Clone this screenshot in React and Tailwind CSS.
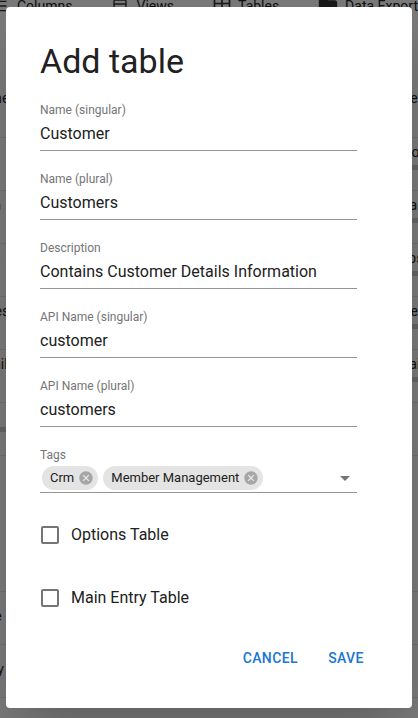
import React from 'react';
import { List, Rows3, Table, Folder } from 'lucide-react';

const fields = [
  { label: 'Name (singular)', value: 'Customer' },
  { label: 'Name (plural)', value: 'Customers' },
  { label: 'Description', value: 'Contains Customer Details Information' },
  { label: 'API Name (singular)', value: 'customer' },
  { label: 'API Name (plural)', value: 'customers' },
];

const bgRows = [
  { left: 'Name', right: 'Types', bar: false },
  { left: 'Title', right: 'Record', bar: true },
  { left: 'Data', right: 'Data', bar: true },
  { left: 'Step', right: 'Steps', bar: true },
  { left: 'Notes', right: 'Notes', bar: true },
  { left: 'Detail', right: 'Detail', bar: true },
];

const CancelIcon = () => (
  <svg viewBox="0 0 24 24" className="w-4 h-4 ml-[-4px] mr-[4px] fill-[#a6a6a6]">
    <path d="M12 2C6.47 2 2 6.47 2 12s4.47 10 10 10 10-4.47 10-10S17.53 2 12 2zm5 13.59L15.59 17 12 13.41 8.41 17 7 15.59 10.59 12 7 8.41 8.41 7 12 10.59 15.59 7 17 8.41 13.41 12 17 15.59z" />
  </svg>
);

const Chip = ({ label }) => (
  <div className="flex items-center h-6 rounded-full bg-[#e4e4e4]">
    <span className="pl-2 pr-2 text-[13px] leading-6 text-[#212121]">{label}</span>
    <CancelIcon />
  </div>
);

const Field = ({ label, value }) => (
  <div className="w-[317px]">
    <div className="h-[15px] text-[12px] leading-[15px] text-[#757575]">{label}</div>
    <div className="pt-[6px] pb-[7px] text-[16px] leading-[19px] text-[#212121] border-b border-[#949494] whitespace-nowrap">
      {value}
    </div>
  </div>
);

const CheckRow = ({ label }) => (
  <div className="flex items-center h-[42px]">
    <div className="w-[18px] h-[18px] ml-[1px] border-2 border-[#757575] rounded-[2px]" />
    <span className="ml-[12px] text-[16px] leading-6 text-[#212121]">{label}</span>
  </div>
);

export default function App() {
  return (
    <div
      className="relative w-full h-[718px] overflow-hidden bg-[#f5f5f5]"
      style={{ fontFamily: 'Roboto, "Liberation Sans", sans-serif' }}
    >
      {/* page behind the dialog */}
      <div className="flex items-center h-[16px] -mt-[2px] text-[14px] leading-4 text-[#222]">
        <div className="flex items-center w-[122px] -ml-[8px] gap-[9px]">
          <List size={16} className="text-[#333]" />
          <span>Columns</span>
        </div>
        <div className="flex items-center w-[110px] gap-[9px] ml-[8px]">
          <Rows3 size={16} className="text-[#333]" />
          <span>Views</span>
        </div>
        <div className="flex items-center w-[116px] gap-[6px]">
          <Table size={20} className="text-[#333]" />
          <span>Tables</span>
        </div>
        <div className="flex items-center gap-[7px] whitespace-nowrap">
          <Folder size={20} className="fill-[#333] text-[#333]" />
          <span>Data Export</span>
        </div>
      </div>
      <div className="mt-[70px] border-b border-[#dedede]">
        {bgRows.map((r, i) => (
          <div
            key={i}
            className={`flex justify-between h-[53px] text-[14px] text-[#222] ${i === 0 ? '' : 'border-t border-[#dedede]'}`}
          >
            <span className="-ml-[28px] mt-[4px]">{r.left}</span>
            <div className="flex flex-col items-start w-[30px] mt-[4px]">
              <span>{r.right}</span>
              {r.bar && <div className="mt-[2px] h-[5px] w-[30px] bg-[#c8c8c8]" />}
            </div>
          </div>
        ))}
      </div>
      <div className="h-[52px] flex items-center">
        <div className="h-[5px] w-[30px] bg-[#c8c8c8]" />
      </div>
      <div className="border-t border-[#dedede] h-[136px]" />
      {['Type', 'Entry', 'Cy'].map((t, i) => (
        <div key={i} className="flex h-[53px] border-t border-[#dedede] text-[14px] text-[#222]">
          <span className="-ml-[28px] mt-[14px]">{t}</span>
        </div>
      ))}

      {/* backdrop */}
      <div className="absolute inset-0 bg-black/50" />

      {/* dialog */}
      <div className="absolute left-[6px] top-[7px] w-[406px] h-[701px] bg-white rounded shadow-2xl">
        <div className="flex flex-col gap-[21px] pt-[33px] pl-[34px]">
          <h2 className="text-[34px] leading-[42px] text-[#212121] font-normal">Add table</h2>
          {fields.map(f => (
            <Field key={f.label} label={f.label} value={f.value} />
          ))}
          <div className="w-[317px]">
            <div className="h-[15px] text-[12px] leading-[15px] text-[#757575]">Tags</div>
            <div className="flex items-center pt-[3px] pb-[2px] border-b border-[#949494]">
              <div className="flex items-center gap-[5px] ml-[2px]">
                <Chip label="Crm" />
                <Chip label="Member Management" />
              </div>
              <svg viewBox="0 0 24 24" className="w-6 h-6 ml-auto fill-[#757575]">
                <path d="M7 10l5 5 5-5z" />
              </svg>
            </div>
          </div>
          <CheckRow label="Options Table" />
          <CheckRow label="Main Entry Table" />
          <div className="flex justify-end gap-2 pr-[34px]">
            <button className="min-w-[64px] h-[36px] px-2 text-[14px] font-medium tracking-[0.4px] uppercase text-[#1976d2]">
              Cancel
            </button>
            <button className="min-w-[64px] h-[36px] px-2 text-[14px] font-medium tracking-[0.4px] uppercase text-[#1976d2]">
              Save
            </button>
          </div>
        </div>
      </div>
    </div>
  );
}
